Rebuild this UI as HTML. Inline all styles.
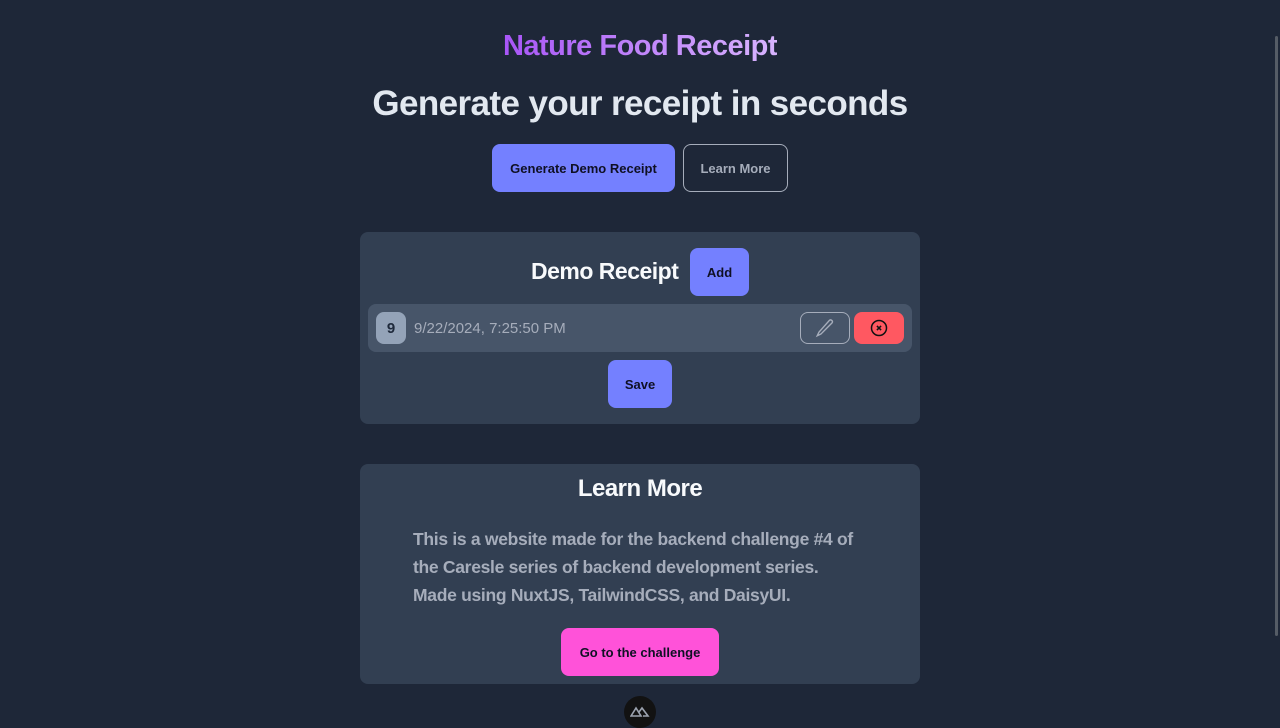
<!DOCTYPE html>
<html><head><meta charset="utf-8"><style>
*{box-sizing:border-box;margin:0;padding:0}
html,body{width:1280px;height:720px;overflow:hidden;background:#1e2738;font-family:"Liberation Sans",sans-serif}
.abs{position:absolute}
.c{text-align:center;left:0;width:1280px}
.btn{position:absolute;display:flex;align-items:center;justify-content:center;border-radius:8px;font-weight:bold;font-size:13px;color:#0f1024}
.p{background:#7480ff}
</style></head><body>
<div class="abs c" style="top:30px;font-size:29px;font-weight:bold;letter-spacing:-0.5px"><span style="background:linear-gradient(90deg,#a855f7,#d8b4fe);-webkit-background-clip:text;color:transparent">Nature Food Receipt</span></div>
<div class="abs c" style="top:84px;font-size:35px;font-weight:bold;color:#e2e8f0;letter-spacing:-0.6px">Generate your receipt in seconds</div>
<div class="btn p" style="left:492px;top:144px;width:183px;height:48px">Generate Demo Receipt</div>
<div class="btn" style="left:683px;top:144px;width:105px;height:48px;border:1px solid #a6adbb;color:#a6adbb">Learn More</div>

<div class="abs" style="left:360px;top:232px;width:560px;height:192px;background:#323f52;border-radius:8px"></div>
<div class="abs" style="left:531px;top:258px;font-size:23px;font-weight:bold;color:#f8fafc;letter-spacing:-0.5px">Demo Receipt</div>
<div class="btn p" style="left:690px;top:248px;width:59px;height:48px">Add</div>
<div class="abs" style="left:368px;top:304px;width:544px;height:48px;background:#475569;border-radius:8px"></div>
<div class="btn" style="left:376px;top:312px;width:30px;height:32px;background:#94a3b8;font-size:15px;color:#1e293b">9</div>
<div class="abs" style="left:414px;top:320px;font-size:15px;color:#a6adbb">9/22/2024, 7:25:50 PM</div>
<div class="btn" style="left:800px;top:312px;width:50px;height:32px;border:1px solid #a6adbb">
<svg width="22" height="22" viewBox="0 0 24 24" fill="none" stroke="#a6adbb" stroke-width="1.5"><path d="M16.9 3.6a2 2 0 0 1 2.8 2.8L7.5 18.6 3.5 20.5l1.9-4z"/></svg></div>
<div class="btn" style="left:854px;top:312px;width:50px;height:32px;background:#ff5861">
<svg width="20" height="20" viewBox="0 0 24 24" fill="none" stroke="#111" stroke-width="1.8"><circle cx="12" cy="12" r="9"/><path d="M9.5 9.5l5 5M14.5 9.5l-5 5"/></svg></div>
<div class="btn p" style="left:608px;top:360px;width:64px;height:48px">Save</div>

<div class="abs" style="left:360px;top:464px;width:560px;height:220px;background:#323f52;border-radius:8px"></div>
<div class="abs c" style="top:475px;font-size:24px;font-weight:bold;color:#f8fafc;letter-spacing:-0.5px">Learn More</div>
<div class="abs" style="left:413px;top:525px;font-size:17.5px;font-weight:bold;color:#a6adbb;line-height:28px;white-space:nowrap;letter-spacing:-0.3px">This is a website made for the backend challenge #4 of<br>the Caresle series of backend development series.<br>Made using NuxtJS, TailwindCSS, and DaisyUI.</div>
<div class="btn" style="left:561px;top:628px;width:158px;height:48px;background:#ff52d9">Go to the challenge</div>
<div class="abs" style="left:624px;top:696px;width:32px;height:32px;border-radius:50%;background:#121212"></div>
<svg class="abs" style="left:630px;top:704px" width="20" height="14" viewBox="0 0 20 14" fill="none" stroke="#9ca3af" stroke-width="1.6"><path d="M1 12L6 4l5 8zM9 8l3-4 6 8h-5"/></svg>
<div class="abs" style="left:1275px;top:36px;width:3px;height:600px;background:#555c66;border-radius:2px"></div>
</body></html>
